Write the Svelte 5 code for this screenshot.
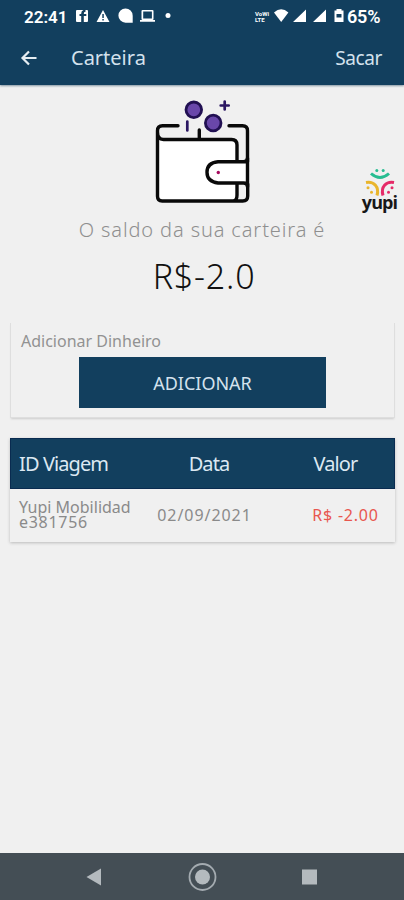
<script lang="ts">
    interface Trip {
        id: string[];
        date: string;
        value: string;
    }

    const balance = "R$-2.0";
    const trips: Trip[] = [
        { id: ["Yupi Mobilidad", "e381756"], date: "02/09/2021", value: "R$ -2.00" },
    ];
</script>

<div class="screen">
    <header>
        <div class="status">
            <span class="clock">22:41</span>
            <svg class="notices" width="100" height="18" viewBox="75 8 100 18" fill="#fff">
                <path d="M77 10h6.500q-2.300.8-2.300 3.500v.5H79.500v2h1.700v6H77q-1 0-1-1V11q0-1 1-1zM85.500 10h1.500q1 0 1 1v10q0 1-1 1h-3.200v-6h2.500v-2h-2.500q-.2-2.200 1.700-2.200z" />
                <path fill-rule="evenodd" d="M103 10l6.500 12h-13zM102.300 14v4h1.500v-4zm0 5v1.500h1.500V19z" />
                <path d="M125.500 8.500a7.200 7.200 0 0 1 7.200 7.200v7h-7.200a7.100 7.100 0 0 1 0-14.200z" />
                <path fill-rule="evenodd" d="M142.500 10h10q1 0 1 1v8q0 1-1 1h2.500v1.800h-15V20h2.500q-1 0-1-1v-8q0-1 1-1zm.7 1.600v6.900h8.700v-6.900z" />
                <circle cx="168" cy="15.600" r="2.500" />
            </svg>
            <div class="lte"><span>VoWi</span><span>LTE</span></div>
            <svg class="signals" width="72" height="18" viewBox="273 8 72 18" fill="#fff">
                <path d="M274 12.500q7.200-6.500 14.400 0L281.200 22z" />
                <path d="M306 9.500V22h-13zM326 9.500V22h-13z" />
                <path fill-rule="evenodd" d="M336.500 9h5v1.500h2V22h-9V10.500h2zm0 5v3.500h5V14z" />
            </svg>
            <span class="percent">65%</span>
        </div>
        <nav>
            <button class="back" aria-label="Voltar">
                <svg width="18" height="18" viewBox="0 0 18 18">
                    <path d="M16.500 9H3M9 2.500L2.500 9L9 15.500" />
                </svg>
            </button>
            <h1>Carteira</h1>
            <button class="withdraw">Sacar</button>
        </nav>
    </header>

    <main>
        <section class="balance">
            <svg class="wallet" width="100" height="110" viewBox="153 97 100 110">
                <path class="fill" d="M157.500 137q2 2.500 5 2.500h69q5.500 0 5.500 5.500v56H162q-4.500 0-4.500-4.500z" />
                <path
                    class="line"
                    d="M178 125.800h-15.500q-5 0-5 5v65.500q0 4.700 4.700 4.700h80.500q5 0 5-5v-12M229 125.800h13.500q5 0 5 5v31M157.500 132q0 7.500 6 7.500h68q5.500 0 5.500 5.500v17M237 183v12q0 6-4 6M199.300 130v8"
                />
                <path class="fill" d="M247.500 161.800H218q-11 1-11 10.500t11 10.700h29.500z" />
                <path
                    class="line"
                    d="M247.500 158q0 3.800-4 3.800H218q-11 1-11 10.500t11 10.700h25.500q4 0 4 3.800M247.500 158v29"
                />
                <circle cx="218.300" cy="172.500" r="1.700" fill="#a50b5e" />
                <circle class="coin" cx="193.800" cy="109.800" r="7.800" />
                <circle class="coin" cx="213.200" cy="123" r="7.800" />
                <path class="spark" d="M187.300 121.500v9M224.700 101.500v8M220.700 105.500h8" />
            </svg>
            <p class="caption">O saldo da sua carteira é</p>
            <p class="amount">{balance}</p>
        </section>

        <section class="card add">
            <p>Adicionar Dinheiro</p>
            <button>ADICIONAR</button>
        </section>

        <section class="card trips">
            <div class="row head">
                <span class="id">ID Viagem</span>
                <span class="date">Data</span>
                <span class="value">Valor</span>
            </div>
            {#each trips as trip}
                <div class="row">
                    <span class="id">{#each trip.id as line}<span>{line}</span>{/each}</span>
                    <span class="date">{trip.date}</span>
                    <span class="value">{trip.value}</span>
                </div>
            {/each}
        </section>
    </main>

    <div class="logo">
        <svg width="32" height="29" viewBox="0 0 32 29" fill="none" stroke-width="3">
            <path stroke="#27bd91" d="M7 5.500Q16 13.500 25 5.500" />
            <path stroke="#e9b52c" d="M2 14.500C10 13 15.500 19 13 27.500" />
            <path stroke="#e52b68" d="M30 14.500C22 13 16.500 19 19 27.500" />
            <g stroke="none">
                <circle cx="12.800" cy="2.500" r="1.500" fill="#27bd91" />
                <circle cx="19.200" cy="2.500" r="1.500" fill="#27bd91" />
                <circle cx="4" cy="19.800" r="1.500" fill="#e9b52c" />
                <circle cx="7.500" cy="24.300" r="1.500" fill="#e9b52c" />
                <circle cx="28" cy="19.800" r="1.500" fill="#e52b68" />
                <circle cx="24.500" cy="24.300" r="1.500" fill="#e52b68" />
            </g>
        </svg>
        <span>yupi</span>
    </div>

    <footer>
        <svg width="404" height="47" viewBox="0 0 404 47" fill="#b4babe">
            <path d="M86.500 24L101 15.500v17z" />
            <circle cx="202.500" cy="24" r="7.500" />
            <circle cx="202.500" cy="24" r="13" fill="none" stroke="#a4abb0" stroke-width="1.800" />
            <path d="M302 16.500h15v15h-15z" />
        </svg>
    </footer>
</div>

<style>
    :global(body) {
        margin: 0;
        background: #f0f0f0;
    }

    .screen {
        --navy: #123f5e;
        background: #f0f0f0;
        display: flex;
        flex-direction: column;
        font-family: "Noto Sans", sans-serif;
        height: 900px;
        overflow: hidden;
        position: relative;
        width: 404px;
    }

    p,
    h1 {
        font-weight: 400;
        margin: 0;
    }

    button {
        background: none;
        border: none;
        font-family: inherit;
        padding: 0;
    }

    header {
        background: var(--navy);
        box-shadow: 0 1px 2px #8295a2;
        color: #fff;
        height: 85px;
    }

    .status {
        align-items: center;
        display: flex;
        height: 34px;
        padding-left: 24px;
    }

    .clock,
    .percent {
        font-family: Roboto, sans-serif;
        font-size: 17px;
        font-weight: 600;
        line-height: 34px;
    }

    .clock {
        width: 51px;
    }

    .notices {
        margin-right: 80px;
    }

    .lte {
        display: flex;
        flex-direction: column;
        font-family: Roboto, sans-serif;
        font-size: 6px;
        font-weight: 700;
        line-height: 6px;
        width: 18px;
    }

    .percent {
        font-size: 18px;
        letter-spacing: -0.2px;
        margin-left: 2px;
    }

    nav {
        align-items: center;
        display: flex;
        height: 48px;
        padding: 0 22px 0 20px;
    }

    .back {
        height: 18px;
        width: 51px;
        text-align: left;

        & path {
            fill: none;
            stroke: #e5edf2;
            stroke-width: 2.2;
        }

        & svg {
            display: block;
        }
    }

    h1,
    .withdraw {
        color: #d4e2ed;
        flex: 1;
        font-size: 20px;
        line-height: 48px;
    }

    .withdraw {
        flex: none;
        font-size: 19px;
        letter-spacing: -0.4px;
    }

    .balance {
        align-items: center;
        display: flex;
        flex-direction: column;
        height: 238px;
        padding-top: 12px;
        box-sizing: border-box;
    }

    .wallet {
        margin-left: 2px;

        .fill {
            fill: #fff;
        }

        .line {
            fill: none;
            stroke: #090909;
            stroke-linecap: round;
            stroke-width: 3.4;
        }

        .coin {
            fill: #6947aa;
            stroke: #211052;
            stroke-width: 2.8;
        }

        .spark {
            stroke: #2b1762;
            stroke-linecap: round;
            stroke-width: 2.7;
        }
    }

    .caption {
        color: #8f8f8f;
        font-size: 20px;
        font-weight: 300;
        letter-spacing: 0.88px;
        line-height: 30px;
        margin-top: 8px;
        white-space: nowrap;
    }

    .amount {
        color: #111;
        font-size: 34px;
        font-weight: 350;
        letter-spacing: 0.8px;
        line-height: 40px;
        margin-top: 11px;
        padding-left: 4px;
    }

    .card {
        box-shadow: 0 1px 3px #bbb;
        box-sizing: border-box;
        margin: 0 9px 0 10px;
    }

    .add {
        border: 1px solid #dedede;
        border-top: none;
        box-shadow: 0 2px 2px -1px #ccc;
        height: 95px;
        padding: 7px 10px 0;

        & p {
            color: #929292;
            font-size: 16px;
            line-height: 22px;
        }

        & button {
            background: var(--navy);
            color: #d4e2ed;
            display: block;
            font-size: 18px;
            height: 51px;
            margin: 5px 0 0 58px;
            width: 247px;
        }
    }

    .trips {
        margin-top: 20px;
    }

    .row {
        align-items: center;
        color: #8a8a8a;
        display: grid;
        font-size: 16px;
        grid-template-columns: 129px 131px 124px;
        height: 53px;
        white-space: nowrap;
    }

    .head {
        background: var(--navy);
        box-shadow: inset 0 0 0 1px #092b50;
        color: #dce8f2;
        font-size: 20px;
        height: 51px;
        letter-spacing: -0.9px;

        .date {
            padding-left: 9px;
        }

        .value {
            padding-left: 7px;
        }
    }

    .id {
        padding-left: 9px;

        & span {
            display: block;
            line-height: 15px;
        }

        & span + span {
            letter-spacing: 0.7px;
        }
    }

    .date,
    .value {
        text-align: center;
    }

    .row:not(.head) {
        padding-bottom: 2px;
        box-sizing: border-box;

        .date {
            letter-spacing: 0.95px;
        }

        .value {
            color: #e8574f;
            letter-spacing: 0.8px;
            padding-left: 27px;
        }
    }

    .logo {
        align-items: center;
        display: flex;
        flex-direction: column;
        left: 361px;
        position: absolute;
        top: 168px;
        width: 37px;

        & span {
            color: #181818;
            font-family: "Open Sans", sans-serif;
            font-size: 18px;
            font-weight: 700;
            letter-spacing: -0.9px;
            line-height: 18px;
            margin-top: -4px;
        }
    }

    footer {
        background: #444e55;
        height: 47px;
        margin-top: auto;

        & svg {
            display: block;
        }
    }
</style>
